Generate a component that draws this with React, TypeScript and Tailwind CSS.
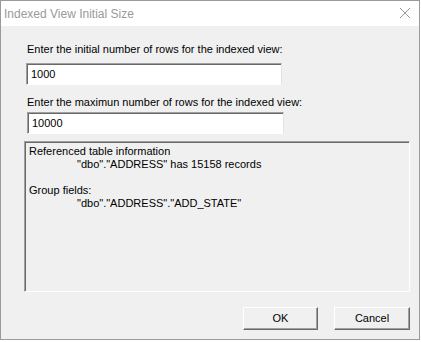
const infoLines = [
  { text: 'Referenced table information', indent: false },
  { text: '"dbo"."ADDRESS" has 15158 records', indent: true },
  { text: '', indent: false },
  { text: 'Group fields:', indent: false },
  { text: '"dbo"."ADDRESS"."ADD_STATE"', indent: true }
];

type FieldProps = {
  label: string;
  value: string;
  labelClass: string;
  inputClass: string;
};

const Field = ({ label, value, labelClass, inputClass }: FieldProps) => {
  return (
    <>
      <p className={`h-[13px] leading-[13px] ${labelClass}`}>{label}</p>
      <div
        className={`h-[22px] bg-white border border-t-[#a0a0a0] border-l-[#a0a0a0] border-b-white border-r-[#e3e3e3] shadow-[inset_1px_1px_0_#696969] flex items-center px-[4px] ${inputClass}`}>
        {value}
      </div>
    </>
  );
};

const DialogButton = ({ label, className }: { label: string; className: string }) => {
  return (
    <button
      className={`h-[23px] bg-[#f0f0f0] border border-t-white border-l-white border-b-[#696969] border-r-[#696969] shadow-[inset_-1px_-1px_0_#a0a0a0] text-black ${className}`}>
      {label}
    </button>
  );
};

export default function App() {
  return (
    <div className="w-[421px] h-[342px] bg-white">
      <div className="w-[420px] h-[340px] border border-[#9a9a9a] flex flex-col font-['Liberation_Sans',Arial,sans-serif] text-[11px] text-black">
        {/* title bar */}
        <div className="h-[25px] bg-white flex items-center justify-between pl-[3px] pr-[8px]">
          <span className="text-[12px] text-[#9a9a9a]">Indexed View Initial Size</span>
          <svg width="12" height="12" viewBox="0 0 12 12" className="mb-[1px]">
            <path d="M1 1 L11 11 M11 1 L1 11" stroke="#9a9a9a" strokeWidth="1" />
          </svg>
        </div>

        {/* body */}
        <div className="flex-1 bg-[#f0f0f0] flex flex-col">
          <Field
            label="Enter the initial number of rows for the indexed view:"
            value="1000"
            labelClass="mt-[17px] ml-[26px]"
            inputClass="mt-[7px] ml-[25px] w-[256px]"
          />
          <Field
            label="Enter the maximun number of rows for the indexed view:"
            value="10000"
            labelClass="mt-[11px] ml-[26px]"
            inputClass="mt-[3px] ml-[26px] w-[257px]"
          />

          <div className="mt-[7px] ml-[23px] w-[386px] h-[151px] border border-t-[#a0a0a0] border-l-[#a0a0a0] border-b-white border-r-white shadow-[inset_1px_1px_0_#696969] pl-[4px] pt-[3px]">
            {infoLines.map((line, i) => (
              <p key={i} className={`h-[13px] leading-[13px] ${line.indent ? 'pl-[48px]' : ''}`}>
                {line.text}
              </p>
            ))}
          </div>

          <div className="mt-[15px] flex gap-[16px] ml-[242px]">
            <DialogButton label="OK" className="w-[75px]" />
            <DialogButton label="Cancel" className="w-[76px]" />
          </div>
        </div>
      </div>
    </div>
  );
}
